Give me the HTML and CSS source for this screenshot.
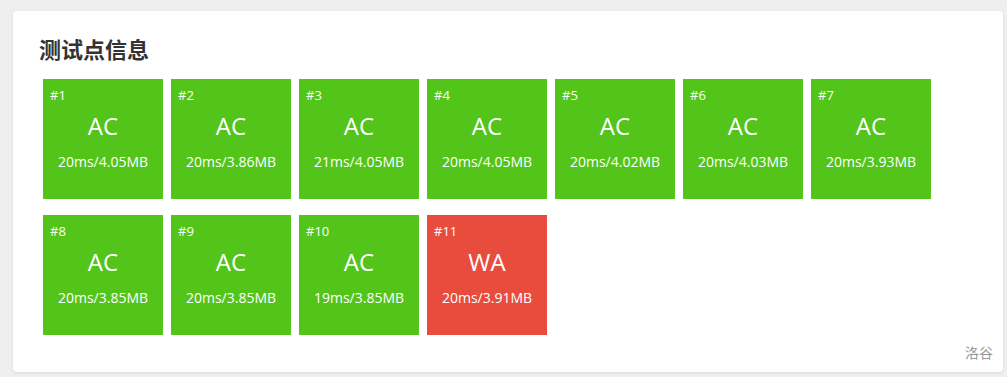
FILE: index.html
```html
<!DOCTYPE html>
<html lang="zh-CN">
<head>
    <meta charset="UTF-8">
    <meta name="viewport" content="width=device-width, initial-scale=1.0">
    <title>测试点信息</title>
    <link rel="stylesheet" href="styles.css">
</head>
<body>
    <div class="card">
        <h3 class="card-title">测试点信息</h3>
        <div class="cases">
            <div class="case ac"><div class="case-id">#1</div><div class="case-status">AC</div><div class="case-info">20ms/4.05MB</div></div>
            <div class="case ac"><div class="case-id">#2</div><div class="case-status">AC</div><div class="case-info">20ms/3.86MB</div></div>
            <div class="case ac"><div class="case-id">#3</div><div class="case-status">AC</div><div class="case-info">21ms/4.05MB</div></div>
            <div class="case ac"><div class="case-id">#4</div><div class="case-status">AC</div><div class="case-info">20ms/4.05MB</div></div>
            <div class="case ac"><div class="case-id">#5</div><div class="case-status">AC</div><div class="case-info">20ms/4.02MB</div></div>
            <div class="case ac"><div class="case-id">#6</div><div class="case-status">AC</div><div class="case-info">20ms/4.03MB</div></div>
            <div class="case ac"><div class="case-id">#7</div><div class="case-status">AC</div><div class="case-info">20ms/3.93MB</div></div>
            <div class="case ac"><div class="case-id">#8</div><div class="case-status">AC</div><div class="case-info">20ms/3.85MB</div></div>
            <div class="case ac"><div class="case-id">#9</div><div class="case-status">AC</div><div class="case-info">20ms/3.85MB</div></div>
            <div class="case ac"><div class="case-id">#10</div><div class="case-status">AC</div><div class="case-info">19ms/3.85MB</div></div>
            <div class="case wa"><div class="case-id">#11</div><div class="case-status">WA</div><div class="case-info">20ms/3.91MB</div></div>
        </div>
        <div class="watermark">洛谷</div>
    </div>
</body>
</html>
```

FILE: styles.css
```css
body {
    margin: 0;
    padding: 11px 4px 4px 13px;
    background-color: #efefef;
    font-family: "Open Sans", "Noto Sans CJK SC", sans-serif;
}
.card {
    background-color: white;
    border-radius: 4px;
    box-shadow: 0 1px 3px rgba(0,0,0,0.1);
    padding: 22px 10px 9px 26px;
}
.card-title {
    margin: 0 0 5px;
    font-size: 22px;
    line-height: 33px;
    font-weight: bold;
    color: #333;
}
.cases {
    display: flex;
    flex-wrap: wrap;
}
.case {
    width: 120px;
    height: 120px;
    margin: 8px 4px;
    padding: 8px 7px 7px;
    box-sizing: border-box;
    color: white;
    text-align: center;
}
.case.ac {
    background-color: #52c41a;
}
.case.wa {
    background-color: #e74c3c;
}
.case-id {
    text-align: left;
    font-size: 13px;
    line-height: 16px;
}
.case-status {
    margin-top: 7px;
    font-size: 24px;
    line-height: 32px;
}
.case-info {
    margin-top: 10px;
    font-size: 14px;
    line-height: 20px;
}
.watermark {
    text-align: right;
    font-size: 14px;
    line-height: 20px;
    color: #999;
}
```
